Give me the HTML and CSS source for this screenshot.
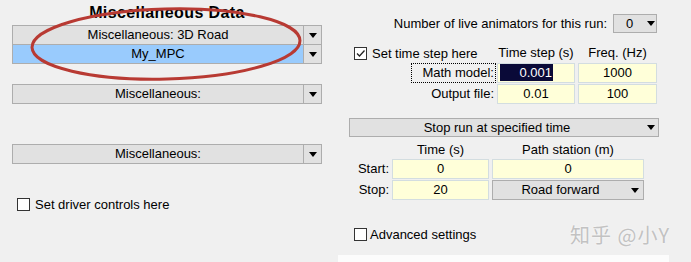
FILE: index.html
```html
<!DOCTYPE html>
<html lang="en">
<head>
  <meta charset="UTF-8">
  <title>Miscellaneous Data</title>
  <link rel="stylesheet" href="styles.css">
</head>
<body>
  <div class="window">
    <div class="col">
      <div class="title">Miscellaneous Data</div>
      <div class="combo">
        <span class="combo-text">Miscellaneous: 3D Road</span>
        <span class="combo-btn"><i class="arrow"></i></span>
      </div>
      <div class="combo combo-blue">
        <span class="combo-text">My_MPC</span>
        <span class="combo-btn"><i class="arrow"></i></span>
      </div>
      <div class="combo gap-20">
        <span class="combo-text">Miscellaneous:</span>
        <span class="combo-btn"><i class="arrow"></i></span>
      </div>
      <div class="combo gap-40">
        <span class="combo-text">Miscellaneous:</span>
        <span class="combo-btn"><i class="arrow"></i></span>
      </div>
      <div class="check driver"><span class="box"></span>Set driver controls here</div>
    </div>

    <div class="col">
      <div class="animators">
        <span>Number of live animators for this run:</span>
        <div class="pick"><span>0</span><i class="arrow"></i></div>
      </div>

      <div class="steps">
        <div class="check"><span class="box checked"><svg width="11" height="11" viewBox="0 0 11 11"><path d="M2 5.5 L4.5 8 L9.5 2.5" fill="none" stroke="#222" stroke-width="1.3"/></svg></span>Set time step here</div>
        <div class="head">Time step (s)</div>
        <div class="head">Freq. (Hz)</div>

        <div class="field-label focus">Math model:</div>
        <div class="cell cell-left"><span class="sel">0.001</span></div>
        <div class="cell">1000</div>

        <div class="field-label">Output file:</div>
        <div class="cell">0.01</div>
        <div class="cell">100</div>
      </div>

      <div class="combo stop-combo">
        <span class="combo-text">Stop run at specified time</span>
        <span class="combo-btn plain"><i class="arrow"></i></span>
      </div>

      <div class="stops">
        <div></div>
        <div class="head">Time (s)</div>
        <div class="head">Path station (m)</div>

        <div class="stop-label">Start:</div>
        <div class="cell">0</div>
        <div class="cell">0</div>

        <div class="stop-label">Stop:</div>
        <div class="cell">20</div>
        <div class="combo road">
          <span class="combo-text">Road forward</span>
          <span class="combo-btn plain"><i class="arrow"></i></span>
        </div>
      </div>

      <div class="check advanced"><span class="box"></span>Advanced settings</div>
      <div class="panel"></div>
    </div>
  </div>

  <svg class="markup" width="691" height="262" viewBox="0 0 691 262">
    <ellipse cx="166" cy="44" rx="134" ry="35" transform="rotate(-1.5 166 44)" fill="none" stroke="#b83a33" stroke-width="3"/>
  </svg>
  <div class="watermark">知乎 @小Y</div>
</body>
</html>
```

FILE: styles.css
```css
body {
  margin: 0;
  height: 262px;
  overflow: hidden;
  position: relative;
  background: #f0f0f0;
  font-family: "Liberation Sans", Arial, sans-serif;
  font-size: 13px;
  color: #000;
}
.window {
  display: flex;
  gap: 27px;
  padding-left: 12px;
}
.col {
  width: 310px;
  display: flex;
  flex-direction: column;
}
.title {
  font-size: 16px;
  font-weight: bold;
  letter-spacing: 0.4px;
  text-align: center;
  line-height: 19px;
  margin: 3px 0 3px;
}
.combo {
  display: flex;
  height: 20px;
  box-sizing: border-box;
  border: 1px solid #adadad;
  background: #e1e1e1;
}
.combo-text {
  flex: 1;
  text-align: center;
  line-height: 18px;
}
.combo-btn {
  width: 17px;
  border-left: 1px solid #adadad;
  display: flex;
  align-items: center;
  justify-content: center;
}
.combo-btn.plain {
  width: 14px;
  border-left: none;
}
.combo-blue {
  margin-top: -1px;
}
.combo-blue .combo-text {
  background: #99cbfd;
}
.gap-20 {
  margin-top: 20px;
}
.gap-40 {
  margin-top: 40px;
}
.arrow {
  width: 0;
  height: 0;
  border-left: 4.5px solid transparent;
  border-right: 4.5px solid transparent;
  border-top: 5px solid #000;
}
.check {
  display: flex;
  align-items: center;
  gap: 5px;
  height: 17px;
  padding-left: 5px;
}
.box {
  width: 13px;
  height: 13px;
  box-sizing: border-box;
  border: 1px solid #333;
  background: #fff;
  display: flex;
  align-items: center;
  justify-content: center;
}
.driver {
  margin-top: 32px;
}

/* right column */
.animators {
  display: flex;
  justify-content: flex-end;
  align-items: center;
  gap: 6px;
  margin-top: 14px;
  padding-right: 2px;
  height: 19px;
}
.pick {
  width: 44px;
  height: 19px;
  box-sizing: border-box;
  border: 1px solid #adadad;
  background: #e1e1e1;
  display: flex;
  align-items: center;
  justify-content: space-between;
  padding: 0 1px 0 12px;
}
.steps {
  display: grid;
  grid-template-columns: 1fr 78px 79px;
  grid-template-rows: 18px 20px 20px;
  column-gap: 3px;
  row-gap: 1px;
  margin-top: 11px;
  padding-right: 2px;
}
.steps .check {
  height: 18px;
}
.head {
  text-align: center;
  line-height: 18px;
}
.field-label {
  justify-self: end;
  width: 85px;
  margin-right: -2px;
  box-sizing: border-box;
  border: 1px dotted transparent;
  text-align: right;
  padding-right: 1px;
  line-height: 18px;
}
.field-label.focus {
  border-color: #000;
}
.cell {
  box-sizing: border-box;
  background: #ffffd9;
  border: 1px solid #d3dde0;
  text-align: center;
  line-height: 18px;
}
.cell-left {
  display: flex;
}
.sel {
  width: 52px;
  margin: 0 0 1px 2px;
  background: #0a0a38;
  color: #fff;
  text-align: right;
  padding-right: 1px;
  line-height: 17px;
}
.stop-combo {
  height: 19px;
  margin-top: 14px;
}
.stops {
  display: grid;
  grid-template-columns: 40px 97px 152px;
  grid-template-rows: 17px 20px 20px;
  column-gap: 3px;
  row-gap: 1px;
  margin-top: 4px;
}
.stops .head {
  line-height: 17px;
}
.stop-label {
  text-align: right;
  line-height: 20px;
}
.road .combo-btn {
  padding-right: 1px;
}
.advanced {
  margin-top: 26px;
  gap: 3px;
}
.panel {
  height: 10px;
  margin: 12px -10px 0 -11px;
  background: #fcfcfc;
}

/* overlays */
.markup {
  position: absolute;
  left: 0;
  top: 0;
  pointer-events: none;
}
.watermark {
  position: absolute;
  left: 570px;
  top: 220px;
  font-family: "Noto Sans CJK SC", sans-serif;
  font-size: 20px;
  letter-spacing: 1px;
  color: #c2c2c2;
  text-shadow: 0 0 2px #fff;
}
```
